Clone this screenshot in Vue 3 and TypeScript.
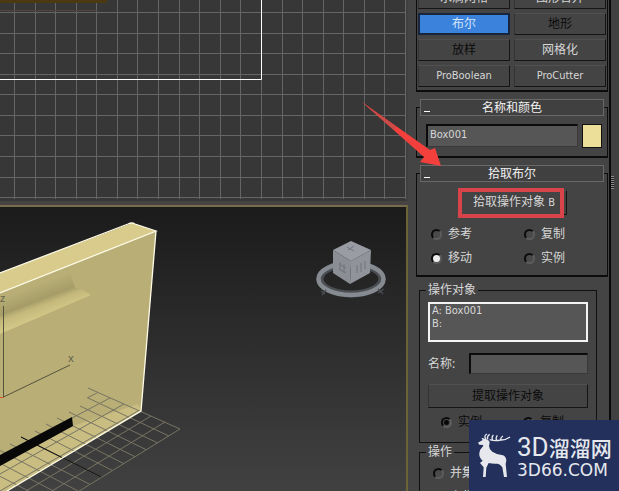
<script setup lang="ts">
import { ref } from 'vue'

interface Tool { name: string; disabled?: boolean }

const tools: Tool[] = [
  { name: '水滴网格' },
  { name: '图形合并' },
  { name: '布尔' },
  { name: '地形', disabled: true },
  { name: '放样', disabled: true },
  { name: '网格化' },
  { name: 'ProBoolean' },
  { name: 'ProCutter' },
]
const activeTool = ref('布尔')
const objectName = ref('Box001')
const operandName = ref('')
const cloneModes = ['参考', '复制', '移动', '实例']
const cloneMode = ref('移动')
const extractModes = ['实例', '复制']
const operations = ['并集', '交集']

const step = 20.58
const columns = Array.from({ length: 20 }, (_, i) => Math.round(14 + step * i) + 0.5)
const rows = Array.from({ length: 10 }, (_, i) => Math.round(12 + step * i) + 0.5)

// Perspective ground grid: one family runs down to the right, the other down to the left.
const starts = [[88, 388], [88, 398], [80, 406], [69, 412], [57, 418], [46, 424], [35, 431], [21, 437], [10, 444], [-1, 450], [-12, 457], [-24, 464]]
const groundA = starts.map(([x, y], k) => ({ x1: x, y1: y, x2: 180 - 11.3 * k, y2: 429 + 6.9 * k }))
const groundB = [
  [180, 429, 76, 493], [165, 422, 52, 491], [151, 416, 26, 491], [138, 411, 0, 491],
  [124, 404, 0, 474], [110, 398, 72, 418], [97, 393, 87, 398],
]
</script>

<template>
  <main class="app">
    <section class="views">
      <svg class="view flat" viewBox="0 0 408 201" preserveAspectRatio="xMinYMin slice" role="img" aria-label="Front viewport">
        <rect width="406" height="201" fill="#373737" />
        <g stroke="#656565">
          <line v-for="x in columns" :key="'c' + x" :x1="x" :x2="x" y1="0" y2="199" />
          <line v-for="y in rows" :key="'r' + y" x1="0" x2="405" :y1="y" :y2="y" />
        </g>
        <rect width="107" height="3" fill="#4b3910" />
        <rect width="98" height="1" y="10" fill="#50443c" />
        <path d="M0 79.5H261.5V0" fill="none" stroke="#fff" />
      </svg>
      <div class="perspective">
        <svg class="view" viewBox="0 207 406 284" preserveAspectRatio="xMinYMin slice" role="img" aria-label="Perspective viewport">
          <defs>
            <linearGradient id="sky" x2="0" y2="1"><stop stop-color="#1b1b1b" /><stop offset="1" stop-color="#414141" /></linearGradient>
            <linearGradient id="groove" gradientUnits="userSpaceOnUse" x1="32" y1="302" x2="38" y2="318"><stop stop-color="#a39a66" /><stop offset=".4" stop-color="#c4b97b" /><stop offset="1" stop-color="#d2c786" /></linearGradient>
            <linearGradient id="shade" gradientUnits="userSpaceOnUse" x1="30" y1="287" x2="36" y2="303"><stop stop-color="#b8ae76" /><stop offset="1" stop-color="#a39a66" /></linearGradient>
          </defs>
          <rect y="207" width="406" height="284" fill="url(#sky)" />
          <polygon points="0,273 132,223 156,231 0,293" fill="#d9cb8b" />
          <polygon points="0,293 156,231 141,411 7,491 0,491" fill="#b8ae76" />
          <polygon points="0,297 70,272 75,288 0,317" fill="url(#shade)" />
          <polygon points="0,316 72,288 79,288 91,295 0,334" fill="url(#groove)" />
          <polygon points="0,466 73,426 138,404 141,411 7,491 0,491" fill="#c9bd82" />
          <g stroke="#777462" stroke-width="1">
            <line v-for="(l, i) in groundA" :key="'a' + i" v-bind="l" />
            <line v-for="(l, i) in groundB" :key="'b' + i" :x1="l[0]" :y1="l[1]" :x2="l[2]" :y2="l[3]" />
          </g>
          <polygon points="0,455 72,417 73,426 0,466" fill="#080808" />
          <path d="M21 437L101 477" stroke="#050505" />
          <path d="M0 273L128 224Q132 222 135 224L156 231L0 293M156 231L141 411L7 491" fill="none" stroke="#fffce8" stroke-width="1.3" />
          <path d="M3.5 306V397L70 365" fill="none" stroke="#55523e" />
          <path d="M0 397.500H4" stroke="#d4572c" />
          <text class="axis" x="0" y="302">z</text>
          <text class="axis" x="68" y="362">x</text>
          <ellipse cx="351" cy="279" rx="31" ry="15" fill="none" stroke="#4b4f53" stroke-width="7" />
          <ellipse cx="351" cy="279" rx="32.500" ry="16" fill="none" stroke="#868a91" stroke-width="4.500" />
          <path d="M321 291l4 3M322 295l4-5M378 293l6-4M378 289l5 5" stroke="#484c51" stroke-width="1.500" />
          <polygon points="351,241 371,250 351,261 333,250" fill="#999ca3" />
          <polygon points="333,250 351,261 350,284 333,273" fill="#8b8e95" />
          <polygon points="371,250 351,261 350,284 370,273" fill="#90939a" />
          <path d="M347 247l7 4M354 246l-6 4M340 262v8M344 264v9M339 264l7 4M339 269l7 4M357 265v8M361 263v9M365 261v8" stroke="#70747b" fill="none" />
        </svg>
      </div>
    </section>

    <aside class="panel">
      <div class="stack">
        <div class="tools">
          <button
            v-for="t in tools" :key="t.name" type="button" class="btn"
            :class="{ active: t.name === activeTool, latin: t.name.startsWith('Pro') }"
            :disabled="t.disabled" @click="activeTool = t.name"
          >{{ t.name }}</button>
        </div>

        <section class="rollup">
          <button type="button" class="head"><span class="minus"></span>名称和颜色</button>
          <div class="naming">
            <input v-model="objectName" class="field latin" type="text" aria-label="名称">
            <button type="button" class="swatch" aria-label="颜色"></button>
          </div>
        </section>

        <section class="rollup">
          <button type="button" class="head"><span class="minus"></span>拾取布尔</button>
          <div class="pick">
            <button type="button" class="btn pick-btn">拾取操作对象 <span class="latin">B</span></button>
            <span class="highlight"></span>
          </div>
          <div class="radios">
            <label v-for="m in cloneModes" :key="m"><input v-model="cloneMode" type="radio" name="clone" :value="m">{{ m }}</label>
          </div>
        </section>

        <fieldset class="group operands">
          <legend>操作对象</legend>
          <ul class="list latin"><li>A: Box001</li><li>B:</li></ul>
          <label class="name-row">名称: <input v-model="operandName" class="field" type="text"></label>
          <button type="button" class="btn" disabled>提取操作对象</button>
          <div class="radios off">
            <label v-for="(m, i) in extractModes" :key="m"><input type="radio" name="extract" :checked="i === 0" disabled>{{ m }}</label>
          </div>
        </fieldset>

        <fieldset class="group operation">
          <legend>操作</legend>
          <div class="ops">
            <label v-for="o in operations" :key="o"><input type="radio" name="op" :value="o">{{ o }}</label>
          </div>
        </fieldset>
      </div>
      <div class="rail"><span class="grip"></span></div>
    </aside>

    <svg class="arrow" viewBox="0 0 80 66" aria-hidden="true">
      <path d="M0 0L68 48L73 46L79 64L58 60L62 55Z" fill="#f3403c" />
      <path d="M0 0L34 25L32 28Z" fill="#c84c49" />
    </svg>

    <div class="brand">
      <svg class="deer" viewBox="20 40 102 138" aria-hidden="true">
        <path d="M23 69L37 61L33 54L46 58Q56 60 58 69L56 79Q56 88 66 96Q79 105 98 107Q107 111 108 122Q105 132 107 143L110 172H101L96 143Q89 133 82 132Q67 133 55 130L48 144L46 172H38L40 143L29 130L37 123Q25 113 27 100Q28 90 38 80L39 76L27 75Z" fill="#e6e8ee" />
        <path d="M47 58Q39 48 50 43M53 59Q48 51 58 44M58 60Q75 65 91 61Q105 62 119 52M68 62Q62 54 69 46M79 62Q75 55 81 47M91 61Q90 53 98 49" fill="none" stroke="#e6e8ee" stroke-width="4" />
      </svg>
      <div class="words">
        <div class="title"><span class="big">3D</span>溜溜网</div>
        <div class="site">3D66.COM</div>
      </div>
    </div>
  </main>
</template>

<style>
body { margin: 0; background: #444; }
</style>

<style scoped>
* { box-sizing: border-box; }
.app {
  position: relative;
  display: grid;
  grid-template-columns: minmax(0, 1fr) 211px;
  height: 100vh;
  overflow: hidden;
  background: #444;
  color: #d6d6d6;
  font: 12px/16px "Noto Sans", "Noto Sans CJK SC", sans-serif;
}
.views { display: grid; grid-template-rows: 201fr 290fr; min-height: 0; background: #484343; }
.view { display: block; width: 100%; height: 100%; min-height: 0; overflow: hidden; }
.flat { background: #404040; }
.perspective { min-height: 0; margin-top: 4px; border-top: 2px solid #776d4d; border-right: 2px solid #6c6334; }
.axis { font-size: 11px; fill: #65624c; }
.panel { display: flex; min-height: 0; padding-left: 8px; }
.stack { flex: 1; margin-top: -13px; }
button, input { font: inherit; color: inherit; }
.latin { font-family: "DejaVu Sans Condensed", "DejaVu Sans", sans-serif; font-size: 11px; }
.tools {
  display: grid;
  grid-template-columns: 1fr 1fr;
  gap: 4px;
  padding: 0 1px 3px;
  border: solid #0c0c0c;
  border-width: 0 1px 2px;
}
.btn {
  height: 22px;
  padding: 0;
  background: #444;
  border: 1px solid;
  border-color: #505050 #151515 #151515 #333;
  color: #d6d6d6;
  line-height: 18px;
}
.btn:disabled { color: #0b0b0b; }
.btn.active { background: #3b82dd; border: 2px solid #17263c; color: #d5e6fb; }
.rollup { margin-top: 15px; border: solid #0c0c0c; border-width: 1px 1px 2px; }
.head {
  position: relative;
  display: block;
  width: calc(100% - 6px);
  height: 17px;
  margin: -9px 3px 0;
  padding: 0;
  background: #404040;
  border: 1px solid #686868;
  color: #f2f2f2;
  line-height: 15px;
}
.minus { position: absolute; left: 3px; bottom: 3px; width: 6px; height: 1px; background: #fff; }
.naming { display: flex; justify-content: space-between; padding: 8px 5px 8px 9px; }
.field {
  min-width: 0;
  height: 23px;
  padding: 0 2px 4px;
  background: #565656;
  border: solid;
  border-width: 2px 1px 1px 2px;
  border-color: #0b0b0b #393939 #393939 #0b0b0b;
  outline: none;
}
.naming .field { width: 152px; }
.swatch { width: 20px; height: 24px; padding: 0; background: #ecdf9a; border: 1px solid #111; }
.pick { position: relative; display: grid; padding: 8px 40px 0 44px; }
.pick-btn { height: 25px; }
.highlight {
  position: absolute;
  left: 41px;
  top: 6px;
  width: 106px;
  height: 30px;
  border: 4px solid #d8444a;
  pointer-events: none;
}
.radios { display: grid; grid-template-columns: 93px 1fr; gap: 8px 0; padding: 11px 0 9px 14px; }
label { display: flex; align-items: center; }
input[type="radio"] {
  appearance: none;
  flex: none;
  width: 11px;
  height: 11px;
  margin: 0 6px 0 0;
  border: 2px solid;
  border-color: #0b0b0b #5c5c5c #5c5c5c #0b0b0b;
  border-radius: 50%;
  background: #4a4a4a;
}
input[type="radio"]:checked { background: #ececec; }
.off { color: #0b0b0b; }
.off input[type="radio"]:checked { background: radial-gradient(circle, #080808 2px, #4a4a4a 3px); }
.group { min-width: 0; margin: 5px 11px 0 3px; padding: 0 8px; border: 1px solid #111; }
.group legend { margin-left: -2px; padding: 0 2px; }
.operands { display: grid; padding-bottom: 12px; }
.operation { margin-top: 1px; }
.list {
  height: 40px;
  margin: 4px 0 11px;
  padding: 0 2px;
  border: 2px solid #f4f4f4;
  background: #565656;
  line-height: 13px;
  list-style: none;
}
.name-row { justify-content: space-between; }
.name-row .field { width: 119px; height: 21px; }
.operands .btn { height: 24px; margin-top: 10px; }
.operands .radios { grid-template-columns: 82px 1fr; padding: 6px 0 0 13px; }
.ops { display: grid; gap: 8px; padding: 5px 0 0 5px; }
.rail { width: 10px; margin-left: 1px; border-left: 2px solid #0a0a0a; background: #414141; }
.grip { display: block; width: 3px; height: 13px; margin-top: 176px; background: repeating-linear-gradient(#8a8a8a 0 1px, #222 1px 2px); }
.arrow { position: absolute; left: 362px; top: 102px; width: 80px; height: 66px; }
.brand {
  position: absolute;
  right: 0;
  bottom: 0;
  display: flex;
  align-items: center;
  gap: 6px;
  width: 150px;
  height: 71px;
  padding-left: 8px;
  background: #22305b;
  color: #e6e8ee;
}
.deer { flex: none; width: 34px; height: 46px; }
.title { display: flex; align-items: baseline; font: 500 21px/28px "Noto Sans CJK SC", sans-serif; white-space: nowrap; }
.big { font-family: Roboto, sans-serif; font-size: 26px; font-weight: 400; }
.site { font: 17px/18px "DejaVu Sans", sans-serif; }
</style>
